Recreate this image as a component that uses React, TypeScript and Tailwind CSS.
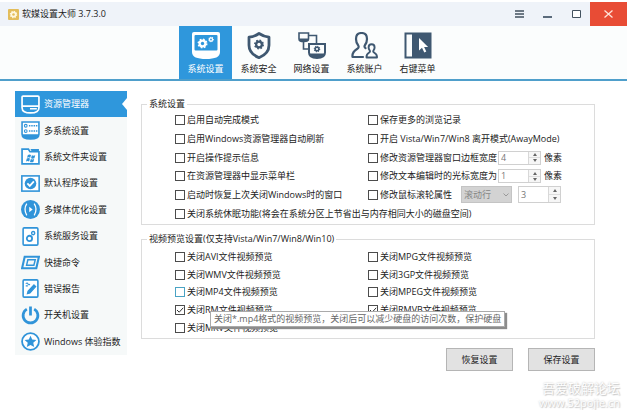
import type { ReactNode } from "react";

function Gear({ x, y, r, color, hole }: { x: number; y: number; r: number; color: string; hole: string }) {
  const step = (2 * Math.PI * r) / 16;
  return (
    <g>
      <circle cx={x} cy={y} r={r} fill={color} />
      <circle
        cx={x}
        cy={y}
        r={r}
        fill="none"
        stroke={color}
        strokeWidth={r * 0.5}
        strokeDasharray={`${step} ${step}`}
      />
      <circle cx={x} cy={y} r={r * 0.42} fill={hole} />
    </g>
  );
}

const navy = "#3f5871";
const blue = "#3094d9";

const tabs: { label: string; icon: ReactNode }[] = [
  {
    label: "系统设置",
    icon: (
      <>
        <path d="M2 0h24a2 2 0 0 1 2 2v18c0 5-5 7-14 7S0 25 0 20V2a2 2 0 0 1 2-2z" fill="#fff" />
        <rect x="2.5" y="3" width="23" height="15.5" rx="1" fill="#2f97dc" />
        <Gear x={10.5} y={11.5} r={4} color="#fff" hole="#2f97dc" />
        <Gear x={19} y={7.5} r={2.2} color="#fff" hole="#2f97dc" />
      </>
    ),
  },
  {
    label: "系统安全",
    icon: (
      <>
        <path
          d="M14 1.5c3 2 6.5 3.300 10 3.700v8c0 6-4 10-10 12.500C8 23.200 4 19.200 4 13.200v-8C7.500 4.800 11 3.500 14 1.500z"
          fill="none"
          stroke={navy}
          strokeWidth="2.8"
          strokeLinejoin="round"
        />
        <Gear x={14} y={12.5} r={4} color={navy} hole="#fbfdfd" />
      </>
    ),
  },
  {
    label: "网络设置",
    icon: (
      <>
        <g fill="none" stroke={navy} strokeWidth="1.6">
          <path d="M1 1h9.500v6c0 2-1.500 2.500-4.700 2.500S1 9 1 7z" />
          <path d="M10.500 3.500h8V11M5.500 9.500V17H11" />
          <path d="M11 12h16v8.500c0 4-3 5.500-8 5.500s-8-1.500-8-5.500z" strokeWidth="2" />
        </g>
        <path d="M1 6.500h9.500c0 2.500-1.500 3-4.700 3S1 9 1 6.500z" fill={navy} />
        <path d="M11 21.500h16c0 3-3 4.500-8 4.500s-8-1.500-8-4.500z" fill={navy} />
        <Gear x={19} y={17} r={2.6} color={navy} hole="#fbfdfd" />
      </>
    ),
  },
  {
    label: "系统账户",
    icon: (
      <g fill="none" stroke={navy} strokeWidth="2.2" strokeLinejoin="round" strokeLinecap="round">
        <path d="M12 25H1.500c-.5-4.500 2-6.500 4.500-8 2-1.200 2-2.500 1-4C5.500 11 5 9 5 7c0-3.500 2-6 5.500-6S16 3.500 16 7c0 2-.5 4-2 6-.8 1.400-.6 2.400.5 3.200" />
        <path
          d="M15.500 25.500c-.3-3 1-4 2.700-5 1-.7 1-1.300.4-2.200-.7-1-1-1.800-1-2.800 0-2 1.200-3.200 3-3.200s3 1.200 3 3.200c0 1-.3 1.800-1 2.800-.6.9-.6 1.500.4 2.200 1.700 1 3.300 2 3 5z"
          strokeWidth="1.9"
        />
      </g>
    ),
  },
  {
    label: "右键菜单",
    icon: (
      <>
        <rect x="0.5" y="0.5" width="27" height="26" fill={navy} />
        <rect x="2.5" y="2.5" width="5.5" height="22" fill="#fbfdfd" />
        <path d="M15 6v12.500l3-2.700 2.300 4.700 2-1-2.200-4.600h4z" fill="#fff" />
      </>
    ),
  },
];

const menu: { label: string; icon: ReactNode }[] = [
  {
    label: "资源管理器",
    icon: (
      <>
        <path d="M2 1h14a1 1 0 0 1 1 1v10c0 3.500-3 5-8 5s-8-1.500-8-5V2a1 1 0 0 1 1-1z" fill="none" stroke="#fff" strokeWidth="1.6" />
        <path d="M1 10.500h16M8.500 13h6.500" stroke="#fff" strokeWidth="1.5" fill="none" />
      </>
    ),
  },
  {
    label: "多系统设置",
    icon: (
      <>
        <path d="M1 1h16v11.500c0 3-3 4.500-8 4.500s-8-1.500-8-4.500z" fill="#fff" stroke={blue} strokeWidth="1.5" />
        <path d="M1 12.500h16c0 3-3 4.500-8 4.500s-8-1.500-8-4.500z" fill={blue} />
        <circle cx="4.5" cy="4.5" r="1.3" fill="none" stroke={blue} />
        <circle cx="4.5" cy="9.5" r="1.3" fill="none" stroke={blue} />
        <path d="M7.500 4.500h8M7.500 9.500h8" stroke={blue} strokeWidth="1.5" strokeDasharray="1.4 .8" />
      </>
    ),
  },
  {
    label: "系统文件夹设置",
    icon: (
      <>
        <path d="M1 16V2h6l1.500 2.500H17V16z" fill="#fff" stroke={blue} strokeWidth="1.6" />
        <path d="M9 2h8v2H10z" fill={blue} />
        <path d="M6.500 7.500q1.500-1 3 0l-.8 2.800q-1.500-1-3 0zM10.300 7.800q1.500.9 3.200 0l-.8 2.800q-1.700.9-3.200 0zM5.500 11q1.500-1 3 0l-.8 2.800q-1.500-1-3 0zM9.300 11.300q1.500.9 3.200 0l-.8 2.800q-1.700.9-3.200 0z" fill={blue} />
      </>
    ),
  },
  {
    label: "默认程序设置",
    icon: (
      <>
        <rect x="0.8" y="1.8" width="16.4" height="14.4" fill="#fff" stroke={blue} strokeWidth="1.5" />
        <circle cx="9" cy="9" r="5.5" fill={blue} />
        <path d="m6 8.800 2.300 2.400L12.200 7" fill="none" stroke="#fff" strokeWidth="1.7" />
      </>
    ),
  },
  {
    label: "多媒体优化设置",
    icon: (
      <>
        <circle cx="9" cy="9" r="9" fill={blue} />
        <path d="M5.500 3.500q-3.500 5.500 0 11M12.500 3.500q3.500 5.500 0 11" fill="none" stroke="#fff" strokeWidth="1.2" />
        <path d="m7.800 6.500 3.200 2.500-3.200 2.500z" fill="#fff" />
      </>
    ),
  },
  {
    label: "系统服务设置",
    icon: (
      <>
        <rect x="2" y="0.8" width="14" height="16.4" rx="1" fill="#fff" stroke={blue} strokeWidth="1.5" />
        <circle cx="8" cy="10.8" r="2.5" fill="none" stroke={blue} strokeWidth="1.7" />
        <circle cx="11.5" cy="5.8" r="1.5" fill="none" stroke={blue} strokeWidth="1.3" />
      </>
    ),
  },
  {
    label: "快捷命令",
    icon: (
      <g fill="none" stroke={blue}>
        <path d="M3.500 3.500H17L14.500 14.500H1z" strokeWidth="2" />
        <path d="M6.500 6.500h7l-1.300 5H5.300z" strokeWidth="1.4" />
      </g>
    ),
  },
  {
    label: "错误报告",
    icon: (
      <>
        <rect x="2" y="0.8" width="14" height="16.4" rx="1" fill="#fff" stroke={blue} strokeWidth="1.5" />
        <path d="m12.300 5.500 1.700 1.700-5.500 6-2.500.8.700-2.500z" fill={blue} stroke={blue} />
        <path d="M4.500 4.500q1.500-1.500 2 0t2 .5M4.500 6.500h2" fill="none" stroke={blue} />
      </>
    ),
  },
  {
    label: "开关机设置",
    icon: (
      <path d="M5.500 3a7 7 0 1 0 7 0M9 .5V9" fill="none" stroke={blue} strokeWidth="2.6" />
    ),
  },
  {
    label: "Windows 体验指数",
    icon: (
      <>
        <circle cx="9" cy="9" r="8" fill="#fff" stroke={blue} strokeWidth="1.7" />
        <path d="m9 3.500 1.600 3.700 4 .4-3 2.700.9 3.900L9 12.200l-3.500 2 .9-3.900-3-2.700 4-.4z" fill={blue} />
      </>
    ),
  },
];

function Check({ id, label, checked, hot }: { id: string; label: string; checked?: boolean; hot?: boolean }) {
  return (
    <span className="flex items-center gap-0.5 whitespace-nowrap">
      <span className="relative flex size-[10px]">
        <input
          id={id}
          type="checkbox"
          defaultChecked={checked}
          className={`peer size-[10px] appearance-none border bg-white ${hot ? "border-[#4aa3c4]" : "border-[#4c4c4c]"}`}
        />
        <svg viewBox="0 0 10 10" className="pointer-events-none absolute inset-0 hidden peer-checked:block">
          <path d="m2 5 2.200 2.200L8.200 2.800" fill="none" stroke="#333" />
        </svg>
      </span>
      <label htmlFor={id}>{label}</label>
    </span>
  );
}

function Spinner({ label, value, tall, disabled }: { label: string; value: number; tall?: boolean; disabled?: boolean }) {
  return (
    <span className={`flex w-[43px] border border-[#d0d0d0] bg-white ${tall ? "h-[17px]" : "h-[14px]"}`}>
      <input
        aria-label={label}
        defaultValue={value}
        disabled={disabled}
        className="w-0 flex-1 pl-0.5 text-[#777]"
      />
      <span className="flex w-3 flex-col border-l border-[#d8d8d8] bg-[#f6f6f6]">
        <button type="button" aria-label="增加" className="flex flex-1 items-center justify-center border-b border-[#ddd]">
          <svg width="4" height="3" viewBox="0 0 4 3"><path d="M0 3 2 0l2 3z" fill="#666" /></svg>
        </button>
        <button type="button" aria-label="减少" className="flex flex-1 items-center justify-center">
          <svg width="4" height="3" viewBox="0 0 4 3"><path d="M0 0l2 3 2-3z" fill="#666" /></svg>
        </button>
      </span>
    </span>
  );
}

function TitleBar() {
  return (
    <header className="mt-0.5 flex h-6 items-stretch bg-[#eff3f9]">
      <div className="flex flex-1 items-center gap-[3px] pl-2">
        <svg width="11" height="11" viewBox="0 0 11 11">
          <rect width="11" height="11" rx="1" fill="#e3bd5b" />
          <Gear x={5.5} y={5.5} r={3} color="#fff8e0" hole="#e3bd5b" />
        </svg>
        <h1>软媒设置大师 3.7.3.0</h1>
      </div>
      <button type="button" aria-label="菜单" className="flex w-7 items-center justify-center">
        <svg width="9" height="8" viewBox="0 0 9 8"><path d="M0 1h9M0 4h9M0 7h9" stroke="#43525f" strokeWidth="1.4" /></svg>
      </button>
      <button type="button" aria-label="最小化" className="flex w-[29px] items-center justify-center">
        <svg width="9" height="8" viewBox="0 0 9 8"><path d="M0 7h9" stroke="#5b6b7c" strokeWidth="2" /></svg>
      </button>
      <button type="button" aria-label="最大化" className="flex w-7 items-center justify-center">
        <svg width="9" height="8" viewBox="0 0 9 8"><path d="M.5.5h8v7h-8z" fill="#fff" stroke="#43525f" /></svg>
      </button>
      <button type="button" aria-label="关闭" className="flex w-[37px] items-center justify-center bg-[#e84c35]">
        <svg width="9" height="8" viewBox="0 0 9 8"><path d="m.5.5 8 7M8.500.5l-8 7" stroke="#ffe3da" strokeWidth="1.3" /></svg>
      </button>
    </header>
  );
}

export default function App() {
  return (
    <div className="bg-white font-['Open_Sans','Noto_Sans_CJK_SC',sans-serif] text-[9px] leading-[14px] text-[#222]">
      <TitleBar />

      <nav className="flex justify-center border-b-2 border-[#4f9fcb] bg-[#fbfdfd] pr-1">
        {tabs.map((tab, i) => (
          <button
            key={tab.label}
            type="button"
            className={`flex h-[53px] w-[53px] flex-col items-center gap-[3px] pt-1.5 ${i === 0 ? "bg-[#2f97dc] text-white" : ""}`}
          >
            <svg width="28" height="27" viewBox="0 0 28 27">{tab.icon}</svg>
            {tab.label}
          </button>
        ))}
      </nav>

      <div className="flex items-start gap-3.5 pt-[10px] pr-8 pl-[15px]">
        <aside className="grid h-[264px] w-28 shrink-0 auto-rows-fr bg-[#f6f9f9]">
          {menu.map((item, i) => (
            <button
              key={item.label}
              type="button"
              className={`relative flex items-center gap-1 pl-1.5 text-left whitespace-nowrap ${i === 0 ? "bg-[#2f97dc] text-white" : ""}`}
            >
              <svg width="19" height="19" viewBox="0 0 18 18">{item.icon}</svg>
              {item.label}
              {i === 0 && (
                <svg width="5" height="12" viewBox="0 0 5 12" className="absolute top-[7px] right-0">
                  <path d="M5 0v12L0 6z" fill="#fff" />
                </svg>
              )}
            </button>
          ))}
        </aside>

        <main className="min-w-0 flex-1 pt-1.5">
          <fieldset className="border border-[#dcdcdc] pb-px pl-[33px]">
            <legend className="-ml-[28px] px-0.5">系统设置</legend>
            <div className="grid h-[112px] auto-rows-fr grid-cols-[193px_1fr] items-center">
              <Check id="auto-complete" label="启用自动完成模式" />
              <Check id="history" label="保存更多的浏览记录" />
              <Check id="auto-refresh" label="启用Windows资源管理器自动刷新" />
              <Check id="away-mode" label="开启 Vista/Win7/Win8 离开模式(AwayMode)" />
              <Check id="hints" label="开启操作提示信息" />
              <div className="flex items-center">
                <div className="w-[130px]">
                  <Check id="border-width" label="修改资源管理器窗口边框宽度" />
                </div>
                <Spinner label="边框宽度" value={4} disabled />
                <span className="pl-[3px]">像素</span>
              </div>
              <Check id="menu-bar" label="在资源管理器中显示菜单栏" />
              <div className="flex items-center">
                <div className="w-[130px]">
                  <Check id="caret-width" label="修改文本编辑时的光标宽度为" />
                </div>
                <Spinner label="光标宽度" value={1} disabled />
                <span className="pl-[3px]">像素</span>
              </div>
              <Check id="restore-windows" label="启动时恢复上次关闭Windows时的窗口" />
              <div className="flex items-center">
                <div className="w-[93px]">
                  <Check id="wheel" label="修改鼠标滚轮属性" />
                </div>
                <span className="relative mr-[6px] flex">
                  <select
                    aria-label="滚轮属性"
                    disabled
                    className="h-[17px] w-[51px] appearance-none border border-[#c4c4c4] bg-[#d3d3d3] pl-0.5 text-[#858585] opacity-100"
                  >
                    <option>滚动行</option>
                  </select>
                  <svg width="6" height="4" viewBox="0 0 6 4" className="absolute top-[7px] right-[3px]">
                    <path d="m.5.5 2.500 2.500L5.500.5" fill="none" stroke="#999" />
                  </svg>
                </span>
                <Spinner label="滚动行数" value={3} tall />
              </div>
              <div className="col-span-2">
                <Check id="hibernate" label="关闭系统休眠功能(将会在系统分区上节省出与内存相同大小的磁盘空间)" />
              </div>
            </div>
          </fieldset>

          <fieldset className="mt-[7px] border border-[#dcdcdc] pt-0.5 pb-px pl-[33px]">
            <legend className="-ml-[28px] px-0.5">视频预览设置(仅支持Vista/Win7/Win8/Win10)</legend>
            <div className="grid h-[89px] auto-rows-fr grid-cols-[193px_1fr] items-center">
              <Check id="avi" label="关闭AVI文件视频预览" />
              <Check id="mpg" label="关闭MPG文件视频预览" />
              <Check id="wmv" label="关闭WMV文件视频预览" />
              <Check id="3gp" label="关闭3GP文件视频预览" />
              <div className="relative">
                <Check id="mp4" label="关闭MP4文件视频预览" hot />
                <div
                  role="tooltip"
                  className="absolute top-[26px] left-[35px] z-10 border border-[#aaa] bg-white px-[3px] whitespace-nowrap text-[#666] shadow-[2px_2px_1px_#8c8c8c]"
                >
                  关闭*.mp4格式的视频预览，关闭后可以减少硬盘的访问次数，保护硬盘
                </div>
              </div>
              <Check id="mpeg" label="关闭MPEG文件视频预览" />
              <Check id="rm" label="关闭RM文件视频预览" checked />
              <Check id="rmvb" label="关闭RMVB文件视频预览" checked />
              <Check id="mkv" label="关闭MKV文件视频预览" />
            </div>
          </fieldset>

          <div className="mt-[9px] flex justify-end gap-[15px]">
            <button type="button" className="h-[23px] w-[67px] border border-[#b5b5b5] bg-[#e2e2e2]">恢复设置</button>
            <button type="button" className="h-[23px] w-[67px] border border-[#b5b5b5] bg-[#e2e2e2]">保存设置</button>
          </div>
        </main>
      </div>

      <footer className="flex flex-col items-end pt-[9px] pr-[7px] text-white [text-shadow:0_0_2px_#bbb,1px_1px_1px_#d0d0d0]">
        <span className="text-[13px] leading-4">吾爱破解论坛</span>
        <span className="text-[11px] leading-[14px]">www.52pojie.cn</span>
      </footer>
    </div>
  );
}
